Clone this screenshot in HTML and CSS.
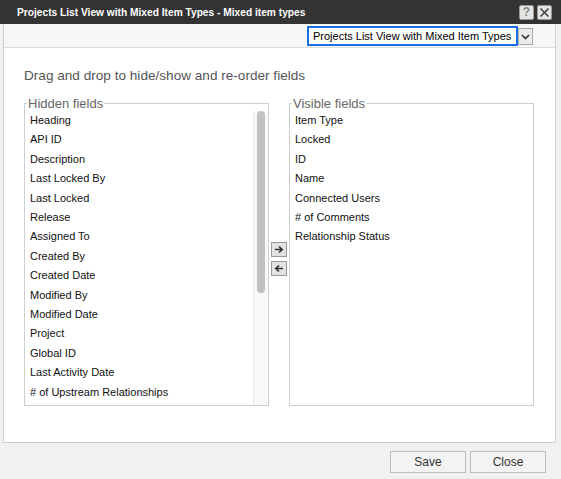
FILE: index.html
```html
<!DOCTYPE html>
<html lang="en">
<head>
    <meta charset="UTF-8">
    <title>Projects List View with Mixed Item Types - Mixed item types</title>
    <link rel="stylesheet" href="styles.css">
</head>
<body>
    <div class="dialog">
        <div class="titlebar">
            <span class="title">Projects List View with Mixed Item Types - Mixed item types</span>
            <span class="title-btn help">?</span>
            <span class="title-btn close">
                <svg width="11" height="11" viewBox="0 0 11 11"><path d="M1.5 1.5 L9.5 9.5 M9.5 1.5 L1.5 9.5" stroke="#444" stroke-width="1.6" fill="none"/></svg>
            </span>
        </div>

        <div class="panel">
            <div class="toolbar">
                <div class="view-select">Projects List View with Mixed Item Types</div>
                <div class="view-drop">
                    <svg width="9" height="6" viewBox="0 0 9 6"><path d="M1 1 L4.5 4.5 L8 1" stroke="#333" stroke-width="1.6" fill="none"/></svg>
                </div>
            </div>

            <div class="content">
                <p class="hint">Drag and drop to hide/show and re-order fields</p>

                <div class="fields">
                    <fieldset class="field-box">
                        <legend>Hidden fields</legend>
                        <div class="list-wrap">
                            <ul class="field-list">
                                <li>Heading</li>
                                <li>API ID</li>
                                <li>Description</li>
                                <li>Last Locked By</li>
                                <li>Last Locked</li>
                                <li>Release</li>
                                <li>Assigned To</li>
                                <li>Created By</li>
                                <li>Created Date</li>
                                <li>Modified By</li>
                                <li>Modified Date</li>
                                <li>Project</li>
                                <li>Global ID</li>
                                <li>Last Activity Date</li>
                                <li># of Upstream Relationships</li>
                            </ul>
                            <div class="scrollbar"><div class="thumb"></div></div>
                        </div>
                    </fieldset>

                    <div class="move-btns">
                        <span class="move-btn">
                            <svg width="10" height="9" viewBox="0 0 10 9"><path d="M1 4.5 H8 M5 1.5 L8.2 4.5 L5 7.5" stroke="#333" stroke-width="1.7" fill="none"/></svg>
                        </span>
                        <span class="move-btn">
                            <svg width="10" height="9" viewBox="0 0 10 9"><path d="M9 4.5 H2 M5 1.5 L1.8 4.5 L5 7.5" stroke="#333" stroke-width="1.7" fill="none"/></svg>
                        </span>
                    </div>

                    <fieldset class="field-box">
                        <legend>Visible fields</legend>
                        <ul class="field-list">
                            <li>Item Type</li>
                            <li>Locked</li>
                            <li>ID</li>
                            <li>Name</li>
                            <li>Connected Users</li>
                            <li># of Comments</li>
                            <li>Relationship Status</li>
                        </ul>
                    </fieldset>
                </div>
            </div>
        </div>

        <div class="footer">
            <button class="btn">Save</button>
            <button class="btn">Close</button>
        </div>
    </div>
</body>
</html>
```

FILE: styles.css
```css
body {
    margin: 0;
    background-color: #f1f1f1;
    font-family: "Liberation Sans", Arial, sans-serif;
    color: #111;
}

.dialog {
    width: 561px;
    height: 479px;
    display: flex;
    flex-direction: column;
}

.titlebar {
    height: 24px;
    background-color: #333;
    display: flex;
    align-items: center;
    padding: 0 9px 0 17px;
    box-sizing: border-box;
}

.title {
    flex: 1;
    color: #fff;
    font-weight: bold;
    font-size: 10.2px;
    white-space: nowrap;
}

.title-btn {
    width: 13px;
    height: 13px;
    background-color: #e4e4e4;
    border: 1px solid #999;
    border-radius: 2px;
    display: flex;
    align-items: center;
    justify-content: center;
    margin-left: 3px;
}

.help {
    color: #888;
    font-weight: bold;
    font-size: 12px;
}

.panel {
    margin: 0 5px 0 3px;
    height: 419px;
    box-sizing: border-box;
    border: 1px solid #cfcfcf;
    border-top: none;
    background-color: #fff;
}

.toolbar {
    height: 24px;
    box-sizing: border-box;
    background-color: #f7f7f7;
    border-bottom: 1px solid #dcdcdc;
    display: flex;
    justify-content: flex-end;
    align-items: flex-start;
    padding: 2px 22px 0 0;
}

.view-select {
    width: 211px;
    height: 20px;
    box-sizing: border-box;
    border: 2px solid #1a6ee6;
    background-color: #fff;
    font-size: 11px;
    line-height: 16px;
    padding-left: 4px;
    color: #000;
    white-space: nowrap;
}

.view-drop {
    width: 15px;
    height: 17px;
    margin-top: 2px;
    box-sizing: border-box;
    border: 1px solid #aaa;
    background-color: #ececec;
    display: flex;
    align-items: center;
    justify-content: center;
}

.content {
    padding: 20px 20px 0 20px;
}

.hint {
    margin: 0 0 12px 0;
    font-size: 13.6px;
    line-height: 16px;
    color: #555;
}

.fields {
    display: flex;
    height: 310px;
}

.field-box {
    width: 245px;
    box-sizing: border-box;
    margin: 0;
    padding: 0;
    border: 1px solid #cfcfcf;
    min-width: 0;
}

.field-box legend {
    font-size: 13px;
    line-height: 15px;
    color: #666;
    padding: 0 1px;
    margin-left: 2px;
}

.list-wrap {
    display: flex;
    height: 100%;
}

.field-list {
    list-style: none;
    margin: 0;
    padding: 0 0 0 5px;
    flex: 1;
}

.field-list li {
    font-size: 11px;
    line-height: 19.4px;
    color: #111;
}

.scrollbar {
    width: 14px;
    border-left: 1px solid #e6e6e6;
    background-color: #f8f8f8;
    display: flex;
    justify-content: center;
}

.thumb {
    width: 8px;
    height: 182px;
    background-color: #c1c1c1;
    border-radius: 4px;
}

.move-btns {
    width: 16px;
    margin: 0 2px;
    display: flex;
    flex-direction: column;
    justify-content: center;
    gap: 4px;
    padding-top: 16px;
}

.move-btn {
    width: 16px;
    height: 15px;
    box-sizing: border-box;
    border: 1px solid #999;
    background-color: #e2e2e2;
    display: flex;
    align-items: center;
    justify-content: center;
}

.footer {
    display: flex;
    justify-content: flex-end;
    gap: 4px;
    padding: 8px 15px 0 0;
}

.btn {
    width: 76px;
    height: 22px;
    border: 1px solid #bdbdbd;
    background-color: #f3f3f3;
    font-family: "Liberation Sans", Arial, sans-serif;
    font-size: 12px;
    color: #333;
    padding: 0;
}
```
